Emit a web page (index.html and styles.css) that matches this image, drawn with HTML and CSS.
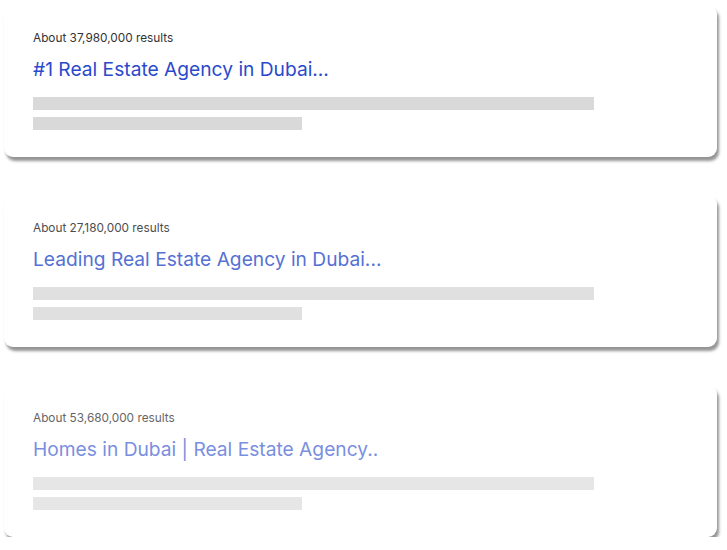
FILE: index.html
```html
<!DOCTYPE html>
<html>
<head>
<meta charset="utf-8">
<link rel="stylesheet" href="styles.css">
</head>
<body>
<div class="list">
  <div class="card c1">
    <div class="count">About 37,980,000 results</div>
    <div class="title">#1 Real Estate Agency in Dubai...</div>
    <div class="bar long"></div>
    <div class="bar short"></div>
  </div>
  <div class="card c2">
    <div class="count">About 27,180,000 results</div>
    <div class="title">Leading Real Estate Agency in Dubai...</div>
    <div class="bar long"></div>
    <div class="bar short"></div>
  </div>
  <div class="card c3">
    <div class="count">About 53,680,000 results</div>
    <div class="title">Homes in Dubai | Real Estate Agency..</div>
    <div class="bar long"></div>
    <div class="bar short"></div>
  </div>
</div>
</body>
</html>
```
FILE: styles.css
```css
html, body {
  margin: 0;
  padding: 0;
  background: #ffffff;
  font-family: Inter, "Liberation Sans", sans-serif;
}
.list {
  display: flex;
  flex-direction: column;
  gap: 38px;
  padding: 5px 10px 0 4px;
}
.card {
  height: 152px;
  box-sizing: border-box;
  background: #fff;
  border-radius: 9px;
  box-shadow: 2px 4px 3px rgba(0,0,0,0.42);
  padding: 25px 0 0 29px;
}
.count {
  font-size: 11.8px;
  line-height: 16px;
  color: #333;
}
.title {
  font-size: 19.2px;
  line-height: 24px;
  margin-top: 11px;
  margin-bottom: 16px;
  color: #2b4acb;
}
.bar {
  height: 13px;
  background: #d9d9d9;
}
.bar.long { width: 561px; }
.bar.short { width: 269px; margin-top: 7px; }
.c2 .count { color: #4d4d4d; }
.c2 .title { color: #5571d3; }
.c2 .bar { background: #e0e0e0; }
.c3 .count { color: #666; }
.c3 .title { color: #7a8fde; }
.c3 .bar { background: #e6e6e6; }
```
